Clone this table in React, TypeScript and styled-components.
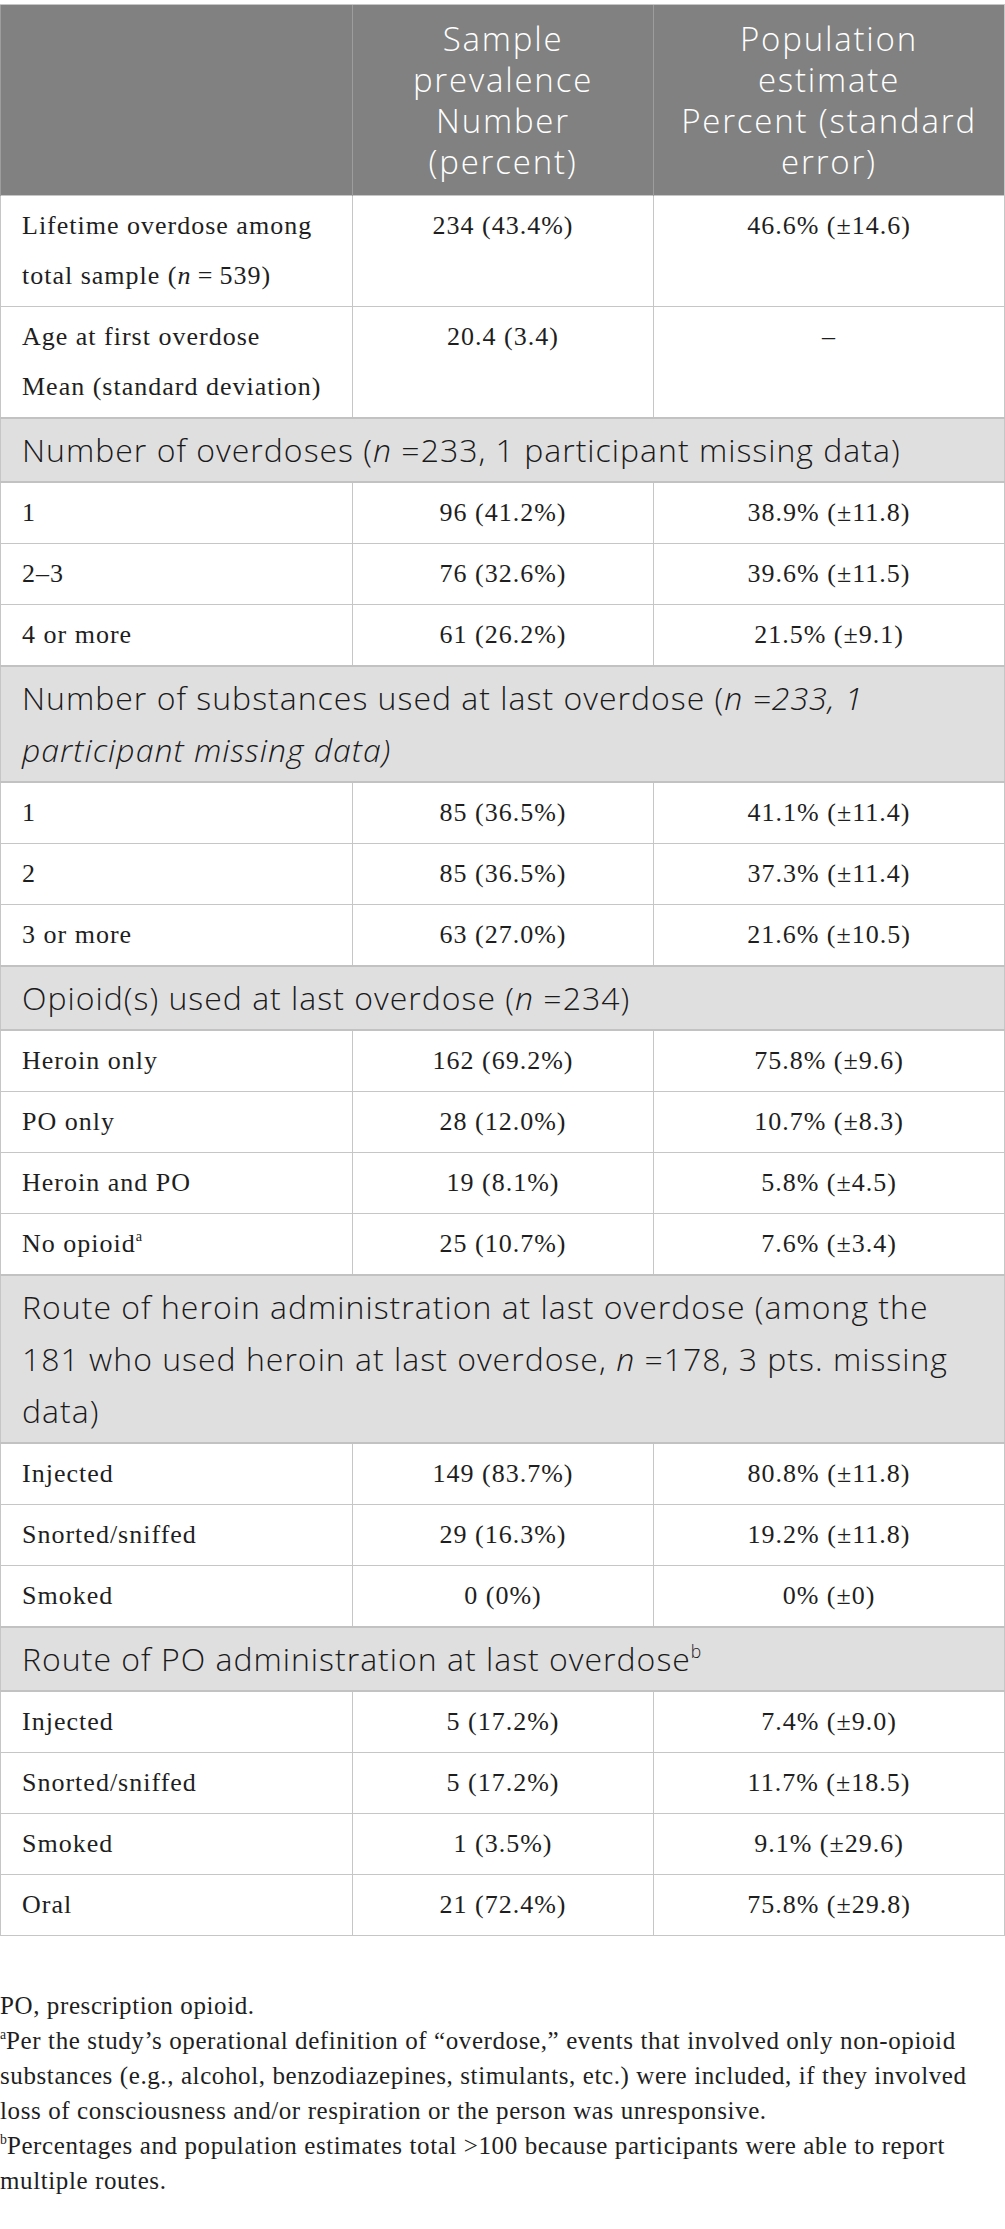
import React from 'react';
import styled, { createGlobalStyle } from 'styled-components';

const Global = createGlobalStyle`
  html, body { margin: 0; padding: 0; background: #ffffff; }
  body { width: 1005px; }
`;

const Page = styled.div`
  width: 1005px;
  padding-top: 4px;
`;

const Table = styled.table`
  width: 1004px;
  border-collapse: collapse;
  table-layout: fixed;
  border: 1px solid #c6c6c6;
`;

const Col = styled.col<{ $w: number }>`
  width: ${(p) => p.$w}px;
`;

const HeadCell = styled.th`
  background: #808180;
  color: #ffffff;
  font-family: "Open Sans", "Noto Sans", sans-serif;
  font-weight: 350;
  font-size: 33px;
  letter-spacing: 1.8px;
  line-height: 41px;
  padding: 13px 2px;
  text-align: center;
  vertical-align: middle;
  border-left: 1px solid #9d9d9d;
  border-top: 1px solid #c6c6c6;
`;

const HeadLine = styled.span`
  display: block;
  white-space: nowrap;
`;

const Cell = styled.td<{ $left?: boolean }>`
  font-family: "Liberation Serif", "Times New Roman", serif;
  font-size: 26px;
  letter-spacing: 1px;
  line-height: 50px;
  padding: 5px 21px;
  color: #1e1e1e;
  text-align: ${(p) => (p.$left ? 'left' : 'center')};
  vertical-align: top;
  border: 1px solid #c6c6c6;
`;

const CellLine = styled.span`
  display: block;
  white-space: nowrap;
`;

const SectionCell = styled.td`
  background: #e0dfe0;
  font-family: "Open Sans", "Noto Sans", sans-serif;
  font-weight: 350;
  font-size: 32px;
  letter-spacing: 1px;
  line-height: 52px;
  padding: 5px 21px;
  color: #1a1a1a;
  text-align: left;
  border-top: 2px solid #c2c2c2;
  border-bottom: 2px solid #c2c2c2;
`;

const SectionLine = styled.span`
  display: block;
  white-space: nowrap;
`;

const Sup = styled.sup`
  font-size: 0.55em;
  line-height: 0;
  vertical-align: 0.75em;
  letter-spacing: 0;
`;

const Notes = styled.div`
  margin-top: 52px;
  font-family: "Liberation Serif", "Times New Roman", serif;
  font-size: 25px;
  line-height: 35px;
  letter-spacing: 0.6px;
  color: #1e1e1e;
`;

const Note = styled.p`
  margin: 0;
  white-space: nowrap;
`;

type RowProps = { label: React.ReactNode[]; a: string; b: string };

const DataRow: React.FC<RowProps> = ({ label, a, b }) => (
  <tr>
    <Cell $left>
      {label.map((l, i) => (
        <CellLine key={i}>{l}</CellLine>
      ))}
    </Cell>
    <Cell>{a}</Cell>
    <Cell>{b}</Cell>
  </tr>
);

const Section: React.FC<{ lines: React.ReactNode[] }> = ({ lines }) => (
  <tr>
    <SectionCell colSpan={3}>
      {lines.map((l, i) => (
        <SectionLine key={i}>{l}</SectionLine>
      ))}
    </SectionCell>
  </tr>
);

export default function App() {
  return (
    <Page>
      <Global />
      <Table>
        <colgroup>
          <Col $w={352} />
          <Col $w={301} />
          <Col $w={351} />
        </colgroup>
        <thead>
          <tr>
            <HeadCell />
            <HeadCell>
              <HeadLine>Sample</HeadLine>
              <HeadLine>prevalence</HeadLine>
              <HeadLine>Number</HeadLine>
              <HeadLine>(percent)</HeadLine>
            </HeadCell>
            <HeadCell>
              <HeadLine>Population</HeadLine>
              <HeadLine>estimate</HeadLine>
              <HeadLine>Percent (standard</HeadLine>
              <HeadLine>error)</HeadLine>
            </HeadCell>
          </tr>
        </thead>
        <tbody>
          <DataRow
            label={[
              'Lifetime overdose among',
              <>
                total sample (<i>n</i>{'\u2009=\u2009'}539)
              </>,
            ]}
            a="234 (43.4%)"
            b="46.6% (±14.6)"
          />
          <DataRow
            label={['Age at first overdose', 'Mean (standard deviation)']}
            a="20.4 (3.4)"
            b="–"
          />
          <Section
            lines={[
              <>
                Number of overdoses (<i>n</i> =233, 1 participant missing data)
              </>,
            ]}
          />
          <DataRow label={['1']} a="96 (41.2%)" b="38.9% (±11.8)" />
          <DataRow label={['2–3']} a="76 (32.6%)" b="39.6% (±11.5)" />
          <DataRow label={['4 or more']} a="61 (26.2%)" b="21.5% (±9.1)" />
          <Section
            lines={[
              <>
                Number of substances used at last overdose (<i>n =233, 1</i>
              </>,
              <i>participant missing data)</i>,
            ]}
          />
          <DataRow label={['1']} a="85 (36.5%)" b="41.1% (±11.4)" />
          <DataRow label={['2']} a="85 (36.5%)" b="37.3% (±11.4)" />
          <DataRow label={['3 or more']} a="63 (27.0%)" b="21.6% (±10.5)" />
          <Section
            lines={[
              <>
                Opioid(s) used at last overdose (<i>n</i> =234)
              </>,
            ]}
          />
          <DataRow label={['Heroin only']} a="162 (69.2%)" b="75.8% (±9.6)" />
          <DataRow label={['PO only']} a="28 (12.0%)" b="10.7% (±8.3)" />
          <DataRow label={['Heroin and PO']} a="19 (8.1%)" b="5.8% (±4.5)" />
          <DataRow
            label={[
              <>
                No opioid<Sup>a</Sup>
              </>,
            ]}
            a="25 (10.7%)"
            b="7.6% (±3.4)"
          />
          <Section
            lines={[
              'Route of heroin administration at last overdose (among the',
              <>
                181 who used heroin at last overdose, <i>n</i> =178, 3 pts. missing
              </>,
              'data)',
            ]}
          />
          <DataRow label={['Injected']} a="149 (83.7%)" b="80.8% (±11.8)" />
          <DataRow label={['Snorted/sniffed']} a="29 (16.3%)" b="19.2% (±11.8)" />
          <DataRow label={['Smoked']} a="0 (0%)" b="0% (±0)" />
          <Section
            lines={[
              <>
                Route of PO administration at last overdose<Sup>b</Sup>
              </>,
            ]}
          />
          <DataRow label={['Injected']} a="5 (17.2%)" b="7.4% (±9.0)" />
          <DataRow label={['Snorted/sniffed']} a="5 (17.2%)" b="11.7% (±18.5)" />
          <DataRow label={['Smoked']} a="1 (3.5%)" b="9.1% (±29.6)" />
          <DataRow label={['Oral']} a="21 (72.4%)" b="75.8% (±29.8)" />
        </tbody>
      </Table>
      <Notes>
        <Note>PO, prescription opioid.</Note>
        <Note>
          <Sup>a</Sup>Per the study’s operational definition of “overdose,” events that involved only non-opioid
        </Note>
        <Note>
          substances (e.g., alcohol, benzodiazepines, stimulants, etc.) were included, if they involved
        </Note>
        <Note>loss of consciousness and/or respiration or the person was unresponsive.</Note>
        <Note>
          <Sup>b</Sup>Percentages and population estimates total &gt;100 because participants were able to report
        </Note>
        <Note>multiple routes.</Note>
      </Notes>
    </Page>
  );
}
